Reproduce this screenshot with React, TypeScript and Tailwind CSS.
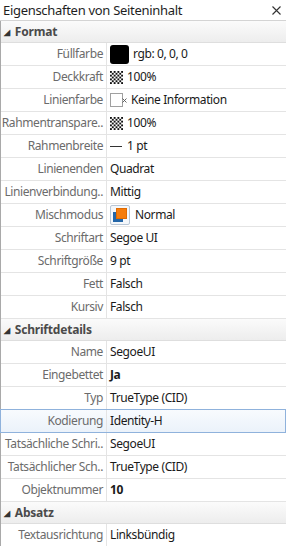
import React from 'react';

type Row = {
    label: string;
    value: string;
    icon?: React.ReactNode;
    bold?: boolean;
    selected?: boolean;
};

const Checker: React.FC = () => (
    <svg width="13" height="13" viewBox="0 0 14 14" className="shrink-0">
        <rect width="14" height="14" fill="#fff" />
        {Array.from({ length: 49 }).map((_, i) => {
            const x = i % 7;
            const y = Math.floor(i / 7);
            return (x + y) % 2 === 0 ? <rect key={i} x={x * 2} y={y * 2} width="2" height="2" fill="#111" /> : null;
        })}
    </svg>
);

const BlackSwatch: React.FC = () => (
    <div className="w-[19px] h-[19px] rounded-[3px] bg-black shrink-0" />
);

const EmptySwatch: React.FC = () => (
    <div className="relative w-[17px] h-[15px] shrink-0">
        <div className="w-[13px] h-[14px] border border-[#a0a0a0] bg-white" />
        <svg width="5" height="5" viewBox="0 0 5 5" className="absolute left-[12px] top-[5px]">
            <path d="M0.5 0.5 L4.5 4.5 M4.5 0.5 L0.5 4.5" stroke="#555" strokeWidth="0.9" />
        </svg>
    </div>
);

const LineIcon: React.FC = () => <div className="w-[12px] h-[1px] bg-[#333] shrink-0 mr-[1px]" />;

const BlendIcon: React.FC = () => (
    <div className="w-[20px] h-[20px] border border-[#b8c6d6] rounded-[2px] bg-[#f4f7fa] relative shrink-0 mr-[1px]">
        <div className="absolute left-[2px] top-[6px] w-[10px] h-[10px] bg-[#2466a8]" />
        <div className="absolute left-[5px] top-[2px] w-[11px] h-[11px] bg-[#f57c0c] border border-[#e06a00]" />
    </div>
);

const sections: { title: string; rows: Row[] }[] = [
    {
        title: 'Format',
        rows: [
            { label: 'Füllfarbe', value: 'rgb: 0, 0, 0', icon: <BlackSwatch /> },
            { label: 'Deckkraft', value: '100%', icon: <Checker /> },
            { label: 'Linienfarbe', value: 'Keine Information', icon: <EmptySwatch /> },
            { label: 'Rahmentranspare..', value: '100%', icon: <Checker /> },
            { label: 'Rahmenbreite', value: '1 pt', icon: <LineIcon /> },
            { label: 'Linienenden', value: 'Quadrat' },
            { label: 'Linienverbindung..', value: 'Mittig' },
            { label: 'Mischmodus', value: 'Normal', icon: <BlendIcon /> },
            { label: 'Schriftart', value: 'Segoe UI' },
            { label: 'Schriftgröße', value: '9 pt' },
            { label: 'Fett', value: 'Falsch' },
            { label: 'Kursiv', value: 'Falsch' },
        ],
    },
    {
        title: 'Schriftdetails',
        rows: [
            { label: 'Name', value: 'SegoeUI' },
            { label: 'Eingebettet', value: 'Ja', bold: true },
            { label: 'Typ', value: 'TrueType (CID)' },
            { label: 'Kodierung', value: 'Identity-H', selected: true },
            { label: 'Tatsächliche Schri..', value: 'SegoeUI' },
            { label: 'Tatsächlicher Sch..', value: 'TrueType (CID)' },
            { label: 'Objektnummer', value: '10', bold: true },
        ],
    },
    {
        title: 'Absatz',
        rows: [{ label: 'Textausrichtung', value: 'Linksbündig' }],
    },
];

const PropertyRow: React.FC<{ row: Row }> = ({ row }) => (
    <div
        className={
            row.selected
                ? 'flex h-[24px] -mt-[1px] -ml-[1px] border border-[#8fb2dc] bg-gradient-to-b from-[#f8fbfe] to-[#ebf2fa]'
                : 'flex h-[23px] border-b border-[#e4e4e4]'
        }
    >
        <div className="w-[106px] shrink-0 pr-[3px] flex items-center justify-end text-[#6b6b6b] whitespace-nowrap border-r border-[#e4e4e4]">
            {row.label}
        </div>
        <div className={`flex-1 flex items-center gap-[4px] pl-[3px] text-[#1a1a1a] whitespace-nowrap ${row.bold ? 'font-bold' : ''}`}>
            {row.icon}
            <span>{row.value}</span>
        </div>
    </div>
);

const App: React.FC = () => {
    return (
        <div className="w-[286px] h-[546px] bg-white overflow-hidden font-['Noto_Sans',sans-serif] text-[12px] leading-none tracking-[-0.4px]">
            {/* Title bar */}
            <div className="h-[21px] flex items-center justify-between pl-[3px] pr-[5px] border-b border-[#d4d4d4] text-[#1e1e1e] text-[13px] tracking-[-0.3px]">
                <span>Eigenschaften von Seiteninhalt</span>
                <svg width="9" height="9" viewBox="0 0 9 9">
                    <path d="M0.5 0.5 L8.5 8.5 M8.5 0.5 L0.5 8.5" stroke="#333" strokeWidth="1.1" />
                </svg>
            </div>

            <div className="border-l border-[#a9a9a9]">
                {sections.map((section) => (
                    <div key={section.title}>
                        <div className="h-[22px] flex items-center gap-[5px] pl-[3px] border-b border-[#dedede] bg-gradient-to-b from-[#fbfbfb] to-[#ededed] text-[#4a4a4a] font-bold tracking-[-0.2px]">
                            <span className="text-[8px] text-[#333]">◢</span>
                            <span>{section.title}</span>
                        </div>
                        {section.rows.map((row) => (
                            <PropertyRow key={row.label} row={row} />
                        ))}
                    </div>
                ))}
            </div>
        </div>
    );
};

export default App;
